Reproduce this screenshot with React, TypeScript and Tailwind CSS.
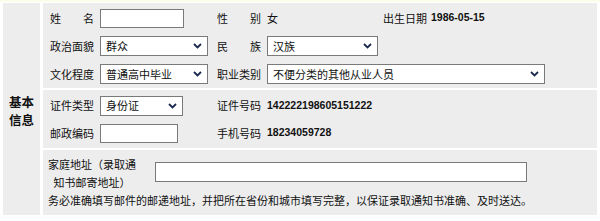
const cjk = "font-['Noto_Sans_CJK_SC',sans-serif]";

function Chevron() {
  return (
    <svg width="9" height="6" viewBox="0 0 9 6" className="shrink-0">
      <polyline points="1,1 4.5,4.5 8,1" fill="none" stroke="#1b2a4e" strokeWidth="1.8" />
    </svg>
  );
}

function Select({ value, w }: { value: string; w: string }) {
  return (
    <div className={`${w} h-[20px] bg-white border border-[#7a7a7a] flex items-center justify-between pl-[5px] pr-[5px]`}>
      <span className="leading-none">{value}</span>
      <Chevron />
    </div>
  );
}

function Spread({ a, b }: { a: string; b: string }) {
  return (
    <div className="w-[44px] flex justify-between">
      <span>{a}</span>
      <span>{b}</span>
    </div>
  );
}

const num = "font-['Liberation_Sans',Arial,sans-serif] font-bold text-[10.5px]";

export default function App() {
  return (
    <div className={`w-[600px] h-[221px] bg-white text-[11px] text-[#111] ${cjk}`}>
      <div className="h-[2px] bg-[#fdfdec]" />
      <div className="flex gap-[3px] pl-[3px] pt-[1px]">
        {/* left title cell */}
        <div className="w-[37px] h-[212px] bg-[#ededed] flex flex-col items-center justify-center pt-[4px]">
          <div className="font-bold text-[12.5px] leading-[18.5px]">基本</div>
          <div className="font-bold text-[12.5px] leading-[18.5px]">信息</div>
        </div>

        <div className="w-[554px] flex flex-col gap-[2px]">
          {/* row 1 */}
          <div className="h-[85px] bg-[#ededed] pl-[7px] pt-[5px] flex flex-col gap-[8px]">
            <div className="h-[20px] flex items-center">
              <div className="w-[50px]">
                <Spread a="姓" b="名" />
              </div>
              <div className="w-[117px]">
                <div className="w-[84px] h-[19px] bg-white border border-[#7a7a7a]" />
              </div>
              <div className="w-[50px]">
                <Spread a="性" b="别" />
              </div>
              <div className="w-[116px]">女</div>
              <div className="flex items-center gap-[4px]">
                <span>出生日期</span>
                <span className={num}>1986-05-15</span>
              </div>
            </div>
            <div className="h-[20px] flex items-center">
              <div className="w-[50px]">政治面貌</div>
              <div className="w-[117px]">
                <Select value="群众" w="w-[108px]" />
              </div>
              <div className="w-[50px]">
                <Spread a="民" b="族" />
              </div>
              <Select value="汉族" w="w-[111px]" />
            </div>
            <div className="h-[20px] flex items-center">
              <div className="w-[50px]">文化程度</div>
              <div className="w-[117px]">
                <Select value="普通高中毕业" w="w-[108px]" />
              </div>
              <div className="w-[50px]">职业类别</div>
              <Select value="不便分类的其他从业人员" w="w-[278px]" />
            </div>
          </div>

          {/* row 2 */}
          <div className="h-[58px] bg-[#ededed] pl-[7px] pt-[6px] flex flex-col gap-[8px]">
            <div className="h-[19px] flex items-center">
              <div className="w-[50px]">证件类型</div>
              <div className="w-[117px]">
                <Select value="身份证" w="w-[83px]" />
              </div>
              <div className="w-[50px]">证件号码</div>
              <span className={num}>142222198605151222</span>
            </div>
            <div className="h-[20px] flex items-center">
              <div className="w-[50px]">邮政编码</div>
              <div className="w-[117px]">
                <div className="w-[78px] h-[19px] bg-white border border-[#7a7a7a]" />
              </div>
              <div className="w-[50px]">手机号码</div>
              <span className={num}>18234059728</span>
            </div>
          </div>

          {/* row 3 */}
          <div className="h-[65px] bg-[#ededed] pl-[4px] pt-[5px]">
            <div className="flex items-center">
              <div className="w-[90px] text-center leading-[18px]">
                家庭地址（录取通
                <br />
                知书邮寄地址）
              </div>
              <div className="ml-[18px] w-[372px] h-[20px] bg-white border border-[#7a7a7a] -mt-[3px]" />
            </div>
            <div className="leading-[18px] pl-[1px]">
              务必准确填写邮件的邮递地址，并把所在省份和城市填写完整，以保证录取通知书准确、及时送达。
            </div>
          </div>
        </div>
      </div>
    </div>
  );
}
